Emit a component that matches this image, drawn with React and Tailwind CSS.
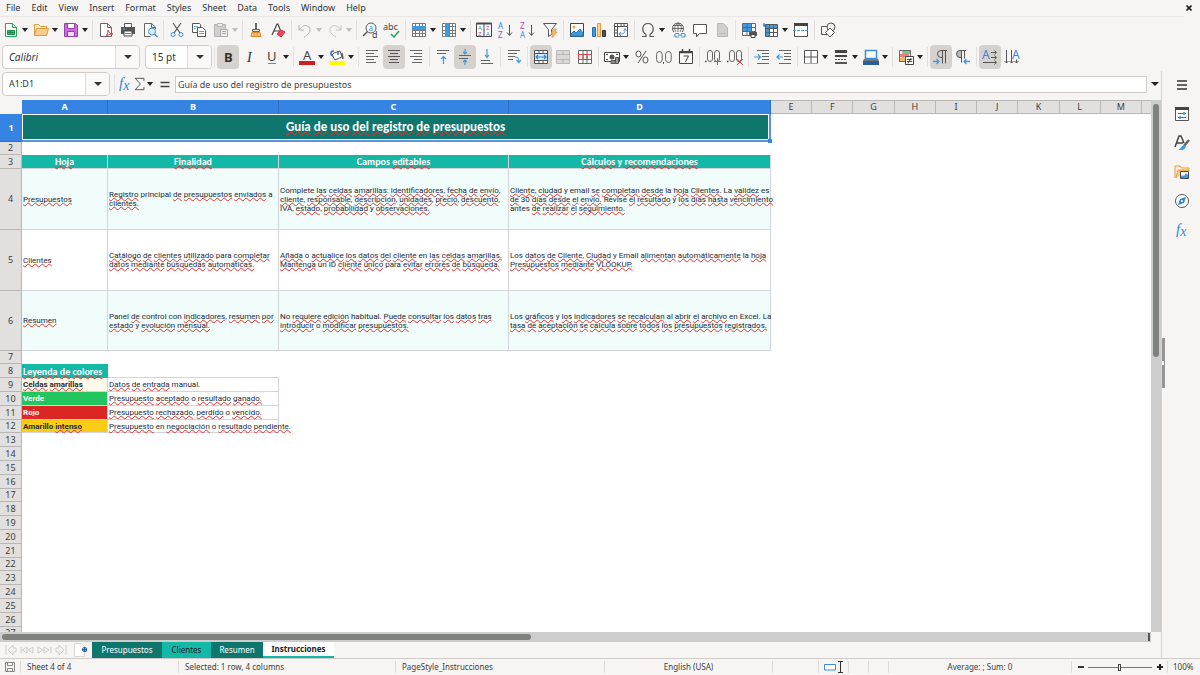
const ICONS = {
  newDoc: (
    <>
      <path d="M2.5 1.5h7l4 4v9h-11z" fill="#fff" stroke="#27a35c" />
      <path d="M9.5 1.5v4h4" fill="#bfe8cf" stroke="#27a35c" />
      <path d="M4.5 8.5h7v4h-7zM4.5 10.5h7M7.5 8.5v4" fill="#43b56f" stroke="#1d8f4c" />
    </>
  ),
  open: (
    <>
      <path d="M1.5 13.5v-11h4l2 2h6v3" fill="#fff3df" stroke="#e39a3b" />
      <path d="M3.5 6.5h12l-2 7h-12z" fill="#f9cd8c" stroke="#e39a3b" />
    </>
  ),
  save: (
    <>
      <path d="M1.5 1.5h11l2 2v11h-13z" fill="#c86dd7" stroke="#9a3fb0" />
      <path d="M4.5 1.5h7v5h-7z" fill="#fff" stroke="#9a3fb0" />
      <path d="M4.5 9.5h7v5h-7z" fill="#f3dbf7" stroke="#9a3fb0" />
    </>
  ),
  pdf: (
    <>
      <path d="M2.5 1.5h7l4 4v9h-11z" fill="#fff" stroke="#666" />
      <path d="M9.5 1.5v4h4" stroke="#666" />
      <path d="M7 15c2-1 3-4 3-7 1 3 3 4 5 4-3 0-6 1-8 3z" stroke="#e0383e" />
    </>
  ),
  print: (
    <>
      <path d="M4.5 5.5v-4h7v4" fill="#fff" stroke="#555" />
      <path d="M1 5h14v7H1z" fill="#555" />
      <path d="M4 9h8v5H4z" fill="#fff" stroke="#4a4a4a" />
      <path d="M5 11.5h6" stroke="#3d8fd1" />
      <path d="M3 7h2" stroke="#5fb4ef" />
    </>
  ),
  preview: (
    <>
      <path d="M13.5 7V5L9.5 1.5h-7v13h6" fill="#fff" stroke="#666" />
      <path d="M9.5 1.5v4h4" stroke="#666" />
      <circle cx="10" cy="9.5" r="3.5" fill="#d8ecfa" stroke="#3d8fd1" />
      <path d="M12.5 12l3 3" stroke="#3d8fd1" strokeWidth="1.5" />
    </>
  ),
  cut: (
    <>
      <path d="M4 1l7 10M12 1L5 11" stroke="#555" strokeWidth="1.2" />
      <circle cx="4" cy="12.5" r="2" stroke="#3d8fd1" />
      <circle cx="12" cy="12.5" r="2" stroke="#3d8fd1" />
    </>
  ),
  copy: (
    <>
      <path d="M1.5 1.5h7l1 1v8h-8z" fill="#fff" stroke="#555" />
      <path d="M6.5 5.5h5l3 3v6h-8z" fill="#fff" stroke="#555" />
      <path d="M3 4.5h4M3 6.5h2M8 9.5h5M8 11.5h5" stroke="#5ba3da" />
    </>
  ),
  paste: (
    <>
      <path d="M1.5 2.5h11v12h-11z" fill="#d0d0d0" stroke="#b5b5b5" />
      <path d="M4.5 1.5h5v3h-5z" fill="#eee" stroke="#b5b5b5" />
      <path d="M7.5 7.5h7v7h-7zM9 9.5h4M9 11.5h4" fill="#eee" stroke="#aaa" />
    </>
  ),
  brush: (
    <>
      <path d="M8 1v6" stroke="#666" strokeWidth="2" />
      <path d="M4.5 7.5h7v2h-7z" fill="#fff" stroke="#666" />
      <path d="M4 10.5h8l1 4H3z" fill="#f9cd8c" stroke="#e0872b" />
      <path d="M6 11v3M9 11v3" stroke="#e0872b" />
    </>
  ),
  clearFmt: (
    <>
      <path d="M2 13L7 2h1l3 8M4 9h6" stroke="#444" strokeWidth="1.2" />
      <path d="M7 12l4-4 4 2-4 5z" fill="#ee4b55" stroke="#d12c38" />
    </>
  ),
  undo: <path d="M2 3v5h5M2 8c3-4 7-6 10-3 3 4-1 8-5 10" stroke="#b4b4b4" />,
  redo: <path d="M14 3v5H9M14 8c-3-4-7-6-10-3-3 4 1 8 5 10" stroke="#c4c4c4" />,
  find: (
    <>
      <circle cx="9" cy="6" r="5" stroke="#555" fill="#fff" />
      <path d="M5.5 9.5L1 14" stroke="#555" strokeWidth="1.5" />
      <text x="6.5" y="8.5" fontSize="8" fill="#3584e4">a</text>
      <text x="10" y="16" fontSize="9" fill="#444">d</text>
    </>
  ),
  spell: (
    <>
      <text x="-1" y="8" fontSize="9" fill="#444">abc</text>
      <path d="M7 12l3 3 5-6" stroke="#27a35c" strokeWidth="1.5" />
    </>
  ),
  rows: (
    <>
      <path d="M1.5 1.5h13v13h-13zM1.5 8.5h13M1.5 11.5h13M4.5 1v13M8.5 1v13M11.5 1v13" stroke="#777" fill="#fff" />
      <path d="M1 4h14v4H1z" fill="#3d9be0" />
    </>
  ),
  cols: (
    <>
      <path d="M1.5 1.5h13v13h-13zM1.5 4.5h13M1.5 8.5h13M1.5 11.5h13M8.5 1v13M11.5 1v13" stroke="#777" fill="#fff" />
      <path d="M4 1h4v14H4z" fill="#3d9be0" />
    </>
  ),
  sort: (
    <>
      <path d="M.5 1.5h15v13H.5zM8 1v14" stroke="#444" fill="#fff" />
      <path d="M.5 1.5h15" stroke="#444" strokeWidth="2" />
      <text x="2" y="8" fontSize="6" fill="#3584e4">A</text>
      <text x="2" y="14" fontSize="6" fill="#b04ac0">Z</text>
      <text x="10" y="8" fontSize="6" fill="#b04ac0">Z</text>
      <text x="10" y="14" fontSize="6" fill="#3584e4">A</text>
    </>
  ),
  az: (
    <>
      <text x="0" y="7" fontSize="8" fill="#3584e4">A</text>
      <text x="0" y="16" fontSize="8" fill="#b04ac0">Z</text>
      <path d="M11.5 3v10M9 10.5l2.5 3 2.5-3" stroke="#555" />
    </>
  ),
  za: (
    <>
      <text x="0" y="7" fontSize="8" fill="#b04ac0">Z</text>
      <text x="0" y="16" fontSize="8" fill="#3584e4">A</text>
      <path d="M11.5 3v10M9 10.5l2.5 3 2.5-3" stroke="#555" />
    </>
  ),
  filter: (
    <>
      <path d="M1.5 1.5h13l-5 6v5l-3 2v-7z" fill="#fff" stroke="#555" />
      <path d="M11 7h3l-1 3h2l-5 6 1-4H9z" fill="#f5b565" stroke="#e39a3b" strokeWidth=".7" />
    </>
  ),
  image: (
    <>
      <path d="M1.5 1.5h13v13h-13z" fill="#fff" stroke="#444" />
      <circle cx="5" cy="5" r="1.5" fill="#f0a24b" />
      <path d="M2 14v-2l3-3 2 2 4-4 3 4v3z" fill="#3d9be0" stroke="#2a7fc4" />
    </>
  ),
  chart: (
    <>
      <path d="M1.5 5.5h3v9h-3z" fill="#3d9be0" stroke="#2472b5" />
      <path d="M6.5 1.5h3v13h-3z" fill="#fbcf93" stroke="#e39a3b" />
      <path d="M11.5 8.5h3v6h-3z" fill="#555" stroke="#333" />
    </>
  ),
  pivot: (
    <>
      <path d="M1.5 1.5h13v13h-13zM1.5 4.5h13M4.5 1.5v13M8 1.5v3M11 1.5v3M1.5 8h3M1.5 11h3" fill="#fff" stroke="#555" />
      <path d="M7 12c4 0 5-1 5-5M8 10l-2 2 2 2M10.5 8.5l1.5-2 1.5 2" stroke="#3d8fd1" />
    </>
  ),
  omega: <path d="M2 14.5h4v-2c-5-3-4-11 2-11s7 8 2 11v2h4" stroke="#555" strokeWidth="1.2" />,
  link: (
    <>
      <circle cx="8" cy="6.5" r="5.5" stroke="#555" />
      <path d="M8 1v9M2.5 6.5h11M4 3.5h8M8 1c-4 3-4 6-2 9M8 1c4 3 4 6 2 9" stroke="#555" strokeWidth=".8" />
      <path d="M4 10h12v6H4z" fill="#f6f5f4" />
      <path d="M9 11.5H6.5a1.7 1.7 0 000 3.500H9M11 11.5h2.500a1.700 1.700 0 010 3.500H11M8 13.2h4" stroke="#3d9be0" strokeWidth="1.2" />
    </>
  ),
  comment: <path d="M1.5 2.5h13v9h-7l-3 3.5v-3.5h-3z" fill="#fff" stroke="#555" />,
  header: <path d="M3.5 1.5h6l4 4v9h-10zM5 11.5h7" fill="#cfcfcf" stroke="#b9b9b9" />,
  printArea: (
    <>
      <path d="M1.5 1.5h13v12h-13zM1.5 5.5h13M1.5 9.5h13M6 1v12M10.5 1v12" fill="#fff" stroke="#666" />
      <path d="M2 2h8v7H2z" fill="#3d9be0" />
      <path d="M2 5.5h8M6 2v7" stroke="#2472b5" />
      <path d="M8 10h8v4H8z" fill="#555" />
      <path d="M10 12.5h4v3h-4z" fill="#fff" stroke="#444" />
    </>
  ),
  freeze: (
    <>
      <path d="M2.5 2.5h12v12h-12zM2.5 6.5h12M2.5 10.5h12M6.5 2v12M10.5 2v12" fill="#fff" stroke="#555" />
      <path d="M3 3h11v3H3zM3 7h3v7H3z" fill="#3d9be0" />
      <path d="M6.5 3v3M10.5 3v3M3 10.5h3" stroke="#2472b5" />
      <path d="M1 1v4M0 3h4" stroke="#2472b5" />
    </>
  ),
  split: (
    <>
      <path d="M1.5 1.5h13v13h-13z" fill="#fff" stroke="#555" />
      <path d="M1 2.5h14" stroke="#444" strokeWidth="3" />
      <path d="M0 8.5h16" stroke="#3d9be0" strokeDasharray="3 1" />
    </>
  ),
  shapes: (
    <>
      <path d="M1.5 4.5h8v8h-8z" stroke="#555" />
      <circle cx="11" cy="5" r="4" fill="#f6f5f4" stroke="#555" />
      <path d="M10 6l4.5 4.5L10 15l-4.5-4.5z" fill="#fff" stroke="#555" />
    </>
  ),
  bold: <text x="4" y="13" fontSize="13" fontWeight="700" fill="#333">B</text>,
  italic: <text x="5" y="13" fontSize="14" fontStyle="italic" fontFamily="Liberation Serif, serif" fill="#333">I</text>,
  underline: (
    <>
      <text x="3" y="12" fontSize="13" fill="#444">U</text>
      <path d="M4 14.5h8" stroke="#3d9be0" />
    </>
  ),
  fontColor: (
    <>
      <text x="4" y="11" fontSize="13" fill="#444">A</text>
      <path d="M0 12h16v4H0z" fill="#c9211e" />
    </>
  ),
  fillColor: (
    <>
      <path d="M5 4l6-2 2 6-7 3-3-5z" fill="#fff" stroke="#555" />
      <path d="M4 7C1 6 1 2 5 2M9 2v4" stroke="#2472b5" strokeWidth="1.5" />
      <path d="M13 4l1 6" stroke="#555" strokeWidth="1.5" />
      <path d="M0 12h16v4H0z" fill="#ffff00" />
    </>
  ),
  left: <path d="M2 1.5h12M2 4.5h8M2 7.5h12M2 10.5h8M2 13.5h10" stroke="#666" />,
  center: <path d="M2 1.5h12M4 4.5h8M2 7.5h12M4 10.5h8M3 13.5h10" stroke="#555" />,
  right: <path d="M2 1.5h12M6 4.5h8M2 7.5h12M6 10.5h8M4 13.5h10" stroke="#666" />,
  top: (
    <>
      <path d="M2 1.5h12M2 4.5h9" stroke="#666" />
      <path d="M8.5 15V7.5M6 10l2.5-2.5L11 10" stroke="#3d9be0" strokeWidth="1.2" />
    </>
  ),
  middle: (
    <>
      <path d="M2 6.5h12M2 9.5h9" stroke="#666" />
      <path d="M8 0v5M6 3l2 2 2-2M8 16v-5M6 13l2-2 2 2" stroke="#3d9be0" strokeWidth="1.2" />
    </>
  ),
  bottom: (
    <>
      <path d="M2 11.5h9M2 14.5h12" stroke="#666" />
      <path d="M8 0v8M6 6l2 2.5L10 6" stroke="#3d9be0" strokeWidth="1.2" />
    </>
  ),
  wrap: (
    <>
      <path d="M2 1.5h12M2 4.5h9M2 7.5h7M2 10.5h5" stroke="#666" />
      <path d="M9 8c3 0 4 1 4 5M10.5 11l2.5 2.5 2-2.5" stroke="#3d9be0" strokeWidth="1.2" />
    </>
  ),
  merge: (
    <>
      <path d="M1.5 1.5h13v13h-13zM1.5 4.5h13M1.5 11.5h13M6 1v3M10 1v3M6 12v3M10 12v3" fill="#fff" stroke="#555" />
      <path d="M2 5h12v6H2z" fill="#d3eafa" />
      <path d="M3 8h10M5 6L3 8l2 2M11 6l2 2-2 2" stroke="#2e88cc" strokeWidth="1.2" />
    </>
  ),
  mergeOff: <path d="M1.5 1.5h13v13h-13zM1.5 5.5h13M1.5 10.5h13M8 1v4M8 11v4" fill="#d9d9d9" stroke="#b9b9b9" />,
  unmerge: (
    <>
      <path d="M1.5 1.5h13v13h-13zM6 1v13M10 1v13" fill="#fff" stroke="#666" />
      <path d="M1.5 5.5h13v5h-13zM6 5v6M10 5v6" stroke="#d8404a" />
    </>
  ),
  currency: (
    <>
      <path d="M.5 3.5h15v9H.5z" fill="#fff" stroke="#444" />
      <circle cx="8" cy="8" r="2.5" fill="#555" />
      <path d="M2 5.5h2M12 5.5h2M2 10.5h2" stroke="#444" />
      <path d="M7 11.5h4v3H7zM11.5 8.5h3v6h-3z" fill="#999" stroke="#555" />
    </>
  ),
  percent: (
    <>
      <ellipse cx="4.5" cy="5" rx="2.5" ry="3" stroke="#555" />
      <ellipse cx="11.5" cy="11" rx="2.5" ry="3" stroke="#555" />
      <path d="M12 2L4 14" stroke="#555" />
    </>
  ),
  number: (
    <>
      <rect x=".6" y="2.5" width="5.6" height="11" rx="2.8" stroke="#666" />
      <rect x="9.6" y="2.5" width="5.6" height="11" rx="2.8" stroke="#666" />
      <path d="M7.5 13v2" stroke="#555" />
    </>
  ),
  date: (
    <>
      <path d="M1.5 2.5h13v12h-13z" fill="#fff" stroke="#444" />
      <path d="M1 3.5h14M4.5 0v3M11.5 0v3" stroke="#444" strokeWidth="1.5" />
      <path d="M5.5 7h5l-3 6" stroke="#444" />
    </>
  ),
  addDec: (
    <>
      <path d="M0 12.5h1.5" stroke="#444" strokeWidth="1.5" />
      <rect x="2.5" y="1.5" width="5" height="11" rx="2.5" stroke="#666" />
      <rect x="9.5" y="1.5" width="5" height="11" rx="2.5" stroke="#666" />
      <path d="M12.5 9v7M9 12.5h7" stroke="#3584e4" />
    </>
  ),
  delDec: (
    <>
      <path d="M0 12.5h1.5" stroke="#444" strokeWidth="1.5" />
      <rect x="2.5" y="1.5" width="5" height="11" rx="2.5" stroke="#666" />
      <rect x="9.5" y="1.5" width="5" height="11" rx="2.5" stroke="#666" />
      <path d="M10 10l6 6M16 10l-6 6" stroke="#e0383e" />
    </>
  ),
  indent: (
    <>
      <path d="M3 1.5h12M8 4.5h7M8 7.5h7M8 10.5h7M3 14.5h12" stroke="#666" />
      <path d="M0 8h6M4 5.5L6.5 8 4 10.5" stroke="#3d9be0" strokeWidth="1.2" />
    </>
  ),
  outdent: (
    <>
      <path d="M3 1.5h12M8 4.5h7M8 7.5h7M8 10.5h7M3 14.5h12" stroke="#666" />
      <path d="M1 8h6M3.5 5.5L1 8l2.5 2.5" stroke="#3d9be0" strokeWidth="1.2" />
    </>
  ),
  borders: (
    <>
      <path d="M1.5 14V1.5h13V14M8 1v13M1 8h14" fill="#fff" stroke="#555" />
      <path d="M1 14.5h14" stroke="#e39a3b" />
    </>
  ),
  borderStyle: (
    <>
      <path d="M2 2.5h12" stroke="#444" strokeWidth="3" />
      <path d="M2 7h12" stroke="#444" strokeWidth="2" />
      <path d="M2 10.5h12" stroke="#555" strokeDasharray="2 1" />
      <path d="M2 14h12" stroke="#555" strokeWidth="2" />
    </>
  ),
  borderColor: (
    <>
      <path d="M2.5 1.5h11v8h-11z" fill="#fff" stroke="#3d8fd1" strokeWidth="1.5" />
      <path d="M1 10h14l1 2H0z" fill="#777" />
      <path d="M0 12h16v4H0z" fill="#2a6099" />
    </>
  ),
  cond: (
    <>
      <path d="M1.5 1.5h11v11h-11zM5 1v11M9 1v11" fill="#fff" stroke="#666" />
      <path d="M5 2h7v3H5z" fill="#6ac98a" />
      <path d="M2 5h9v3H2z" fill="#ef7b80" />
      <path d="M2 9h5v3H2z" fill="#f5b565" />
      <path d="M7.5 7.5h8v8h-8z" fill="#fff" stroke="#444" />
      <path d="M9 10.5h5M9 12.5h5M13 9l-3 5.5" stroke="#444" />
    </>
  ),
  ltr: (
    <>
      <path d="M14 1.5H8a3.5 3.5 0 000 7h1M9.5 1.5v13M12.5 1.5v13" stroke="#555" />
      <path d="M0 12.5h6M3.5 10L6 12.5 3.5 15" stroke="#3d9be0" strokeWidth="1.3" />
    </>
  ),
  rtl: (
    <>
      <path d="M7 1.5H5a3.5 3.5 0 000 7h2z" fill="#bbb" />
      <path d="M11 1.5H5a3.5 3.5 0 000 7h1M6.5 1.5v12M9.5 1.5v8" stroke="#555" />
      <path d="M9 12.5h6M11.5 10L9 12.5l2.5 2.5" stroke="#3d9be0" strokeWidth="1.3" />
    </>
  ),
  textLR: (
    <>
      <text x="0" y="10" fontSize="12" fill="#3584e4">A</text>
      <path d="M9 3.5h5M12.5 1.5l2 2-2 2M9 8.5h5M12.5 6.5l2 2-2 2M1 13.5h13M12.5 11.5l2 2-2 2" stroke="#555" />
    </>
  ),
  textTB: (
    <>
      <text x="8" y="10" fontSize="12" fill="#3584e4">A</text>
      <path d="M2.5 1v13M.5 12l2 2 2-2M7.5 1v13M5.5 12l2 2 2-2M12.5 10.5V14M10.5 12l2 2 2-2" stroke="#555" />
    </>
  ),
  fx: (
    <text x="2" y="12" fontSize="15" fontStyle="italic" fontFamily="Liberation Serif, serif" fill="#2e88d8">
      f<tspan fontSize="14" dy="2">x</tspan>
    </text>
  ),
  sigma: <path d="M12.5 4.5v-3h-10l6 6.5-6 6.5h10v-3" stroke="#444" />,
  equals: <path d="M3.5 6.5h9M3.5 10.5h9" stroke="#444" strokeWidth="1.5" />,
  menu: <path d="M3 4h10M3 8h10M3 12h10" stroke="#333" strokeWidth="1.5" />,
  props: (
    <>
      <path d="M1.5 1.5h13v13h-13z" fill="#fff" stroke="#555" />
      <path d="M1 2.5h14" stroke="#444" strokeWidth="3" />
      <path d="M4 7.5h8M4 11.5h8" stroke="#666" />
      <path d="M10 6v3M6 10v3" stroke="#3d9be0" strokeWidth="1.5" />
    </>
  ),
  styles: (
    <>
      <path d="M1 12L5 1h2l3 7M3 8h6" stroke="#444" strokeWidth="1.5" />
      <path d="M15 5l-5 6" stroke="#666" strokeWidth="2.5" />
      <path d="M10 10l2 2c-2 4-5 3-8 3 3-1 3-4 6-5z" fill="#3d9be0" />
    </>
  ),
  gallery: (
    <>
      <path d="M1 14V2h5l1.5 2H15v3" fill="#fff3df" stroke="#e39a3b" />
      <path d="M2 14l2-8h11" fill="#f9cd8c" stroke="#e39a3b" />
      <path d="M6.5 7.5h8v7h-8z" fill="#fff" stroke="#444" />
      <path d="M7 14v-2l2-1 1 1 2-3 2 2v3z" fill="#3d9be0" />
    </>
  ),
  navigator: (
    <>
      <circle cx="8" cy="8" r="6.5" fill="#fff" stroke="#555" />
      <path d="M12 4l-2 6-6 2 2-6z" fill="#2e88cc" />
      <circle cx="8" cy="8" r="1" fill="#fff" />
    </>
  ),
};

function Icon({ name }) {
  return (
    <svg viewBox="0 0 16 16" className="h-4 w-4 shrink-0 overflow-visible" fill="none" aria-hidden="true">
      {ICONS[name]}
    </svg>
  );
}

function Caret({ dim }) {
  return (
    <svg viewBox="0 0 6 4" className={dim ? "h-1 w-1.5 text-[#bdbdbd]" : "h-1 w-1.5 text-[#222]"} aria-hidden="true">
      <path d="M0 0h6L3 4z" fill="currentColor" />
    </svg>
  );
}

// "|" is a separator, "+" after a name adds a drop-down arrow,
// "*" marks a pressed button and "-" a disabled one
const STANDARD_BAR =
  "newDoc+ open+ save+ | pdf print preview | cut copy paste+- | brush clearFmt | undo+- redo+- | find spell | rows+ cols+ | sort az za filter | image chart pivot | omega+ link comment header- | printArea freeze+ split | shapes";
const FORMAT_BAR =
  "bold* italic underline+ | fontColor+ fillColor+ | left center* right | top middle* bottom | wrap | merge* mergeOff- unmerge | currency+ percent number date | addDec delDec | indent outdent | borders+ borderStyle+ borderColor+ | cond+ | ltr* rtl | textLR* textTB";

function Separator() {
  return <span className="mx-0.5 h-5 w-px shrink-0 bg-[#e3e1df]" />;
}

function ToolItems({ items }) {
  return items.split(" ").map((item, i) => {
    if (item === "|") return <Separator key={i} />;
    const name = item.replace(/[+*-]/g, "");
    const pressed = item.includes("*");
    const disabled = item.includes("-");
    return (
      <span key={name} className="flex shrink-0 items-center">
        <button
          type="button"
          aria-label={name}
          disabled={disabled}
          className={
            pressed
              ? "flex h-6 w-[22px] items-center justify-center rounded bg-[#d5d1cd]"
              : "flex h-6 w-[22px] items-center justify-center rounded"
          }
        >
          <Icon name={name} />
        </button>
        {item.includes("+") && (
          <button type="button" aria-label={`${name} options`} disabled={disabled} className="flex h-6 w-2 items-center">
            <Caret dim={disabled} />
          </button>
        )}
      </span>
    );
  });
}

function Combo({ label, value, className, inputClass }) {
  return (
    <div className={`flex h-6 shrink-0 overflow-hidden rounded border border-[#cfccc9] bg-white ${className}`}>
      <input aria-label={label} defaultValue={value} className={`min-w-0 flex-1 px-1.5 outline-none ${inputClass}`} />
      <button
        type="button"
        aria-label={`${label} list`}
        className="flex w-6 items-center justify-center border-l border-[#dedcda] bg-[#faf9f8]"
      >
        <svg viewBox="0 0 8 4" className="h-1 w-2" aria-hidden="true">
          <path d="M0 0h8L4 4z" fill="#2e3436" />
        </svg>
      </button>
    </div>
  );
}

// Words between tildes carry the spell checker's wavy line
function Spelled({ text }) {
  return text.split(/(~[^~]+~)/).map((part, i) =>
    part.startsWith("~") ? (
      <span
        key={i}
        className="underline decoration-[#e5322d] decoration-wavy decoration-1 underline-offset-0 [text-decoration-skip-ink:none]"
      >
        {part.slice(1, -1)}
      </span>
    ) : (
      part
    )
  );
}

function Lines({ lines }) {
  return lines.map((line) => (
    <span key={line} className="block">
      <Spelled text={line} />
    </span>
  ));
}

const COLUMNS = ["A", "B", "C", "D", "E", "F", "G", "H", "I", "J", "K", "L", "M"];

const HEADINGS = ["~Hoja~", "~Finalidad~", "Campos ~editables~", "~Cálculos~ y ~recomendaciones~"];

const GUIDE = [
  [
    ["~Presupuestos~"],
    ["~Registro~ principal ~de~ ~presupuestos~ ~enviados~ a", "~clientes.~"],
    [
      "Complete ~las~ ~celdas~ ~amarillas~: ~identificadores~, ~fecha~ ~de~ ~envío~,",
      "~cliente~, ~responsable~, ~descripción~, ~unidades~, ~precio~, ~descuento~,",
      "IVA, ~estado~, ~probabilidad~ y ~observaciones.~",
    ],
    [
      "~Cliente~, ~ciudad~ y email ~se~ ~completan~ ~desde~ la ~hoja~ ~Clientes.~ La ~validez~ es",
      "~de~ 30 ~días~ ~desde~ ~el~ ~envío.~ Revise ~el~ ~resultado~ y ~los~ ~días~ ~hasta~ ~vencimiento~",
      "antes ~de~ ~realizar~ ~el~ ~seguimiento.~",
    ],
  ],
  [
    ["~Clientes~"],
    ["~Catálogo~ ~de~ ~clientes~ ~utilizado~ para ~completar~", "~datos~ ~mediante~ ~búsquedas~ ~automáticas.~"],
    [
      "~Añada~ o ~actualice~ ~los~ ~datos~ ~del~ ~cliente~ en ~las~ ~celdas~ ~amarillas.~",
      "~Mantenga~ un ID ~cliente~ ~único~ para ~evitar~ ~errores~ ~de~ ~búsqueda.~",
    ],
    [
      "Los ~datos~ ~de~ ~Cliente~, ~Ciudad~ y Email ~alimentan~ ~automáticamente~ la ~hoja~",
      "~Presupuestos~ ~mediante~ ~VLOOKUP.~",
    ],
  ],
  [
    ["~Resumen~"],
    ["Panel ~de~ control con ~indicadores~, ~resumen~ ~por~", "~estado~ y ~evolución~ ~mensual.~"],
    [
      "No ~requiere~ ~edición~ habitual. ~Puede~ ~consultar~ ~los~ ~datos~ ~tras~",
      "~introducir~ o ~modificar~ ~presupuestos.~",
    ],
    [
      "Los ~gráficos~ y ~los~ ~indicadores~ ~se~ ~recalculan~ al ~abrir~ ~el~ ~archivo~ en Excel. La",
      "~tasa~ ~de~ ~aceptación~ ~se~ ~calcula~ ~sobre~ ~todos~ ~los~ ~presupuestos~ ~registrados.~",
    ],
  ],
];

const LEGEND = [
  { name: "~Celdas~ ~amarillas~", text: "~Datos~ ~de~ ~entrada~ manual.", tone: "bg-[#fffbeb] text-[#1f2937]" },
  { name: "Verde", text: "~Presupuesto~ ~aceptado~ o ~resultado~ ~ganado.~", tone: "bg-[#22c55e] text-white" },
  { name: "~Rojo~", text: "~Presupuesto~ ~rechazado~, ~perdido~ o ~vencido.~", tone: "bg-[#dc2626] text-white" },
  {
    name: "Amarillo ~intenso~",
    text: "~Presupuesto~ en ~negociación~ o ~resultado~ ~pendiente.~",
    tone: "bg-[#facc15] text-[#1f2937]",
  },
];

function RowHead({ n, active }) {
  return (
    <th
      scope="row"
      className={
        active
          ? "border-b border-[#1c71d8] bg-[#3584e4] p-0 text-[9px] font-bold text-white"
          : "border-b border-r border-[#b9b7b5] bg-[#e2e0de] p-0 text-[9px] font-normal text-[#3d3d3d]"
      }
    >
      {n}
    </th>
  );
}

function rowHeight(n) {
  return n % 5 === 2 ? "h-[13px]" : "h-[14px]";
}

function Sheet() {
  const cellText = "[font-family:Roboto,sans-serif] text-[8px] leading-[9px]";
  return (
    <table className="w-full table-fixed border-separate border-spacing-0 leading-[12px]">
      <colgroup>
        <col className="w-[22px]" />
        <col className="w-[86px]" />
        <col className="w-[171px]" />
        <col className="w-[230px]" />
        <col className="w-[262px]" />
        {COLUMNS.slice(4).map((c) => (
          <col key={c} />
        ))}
        <col className="w-[9px]" />
      </colgroup>
      <thead>
        <tr className="h-[14px] text-[9px]">
          <td className="p-0" />
          {COLUMNS.map((c, i) => (
            <th
              key={c}
              scope="col"
              className={
                i < 4
                  ? "border-r border-[#2a6fc9] bg-[#3584e4] p-0 font-bold text-white"
                  : "border-b border-r border-t border-[#b9b7b5] bg-[#e2e0de] p-0 font-normal text-[#3d3d3d]"
              }
            >
              {c}
            </th>
          ))}
          <td className="border-y border-[#b9b7b5] bg-[#e2e0de] p-0" />
        </tr>
      </thead>
      <tbody>
        <tr className="h-[28px]">
          <RowHead n={1} active />
          <td
            colSpan={4}
            className="relative border-b-2 border-r-2 border-[#5c93dc] bg-[#0f766e] p-0 text-center text-[13px] leading-[18px] font-bold text-white shadow-[inset_0_0_0_1px_white] [font-family:Carlito,Lato,sans-serif]"
          >
            <Spelled text="~Guía~ ~de~ ~uso~ ~del~ ~registro~ ~de~ ~presupuestos~" />
            <span className="absolute -bottom-[3px] -right-[3px] h-1 w-1 bg-[#3584e4]" />
          </td>
        </tr>
        <tr className="h-[13px]">
          <RowHead n={2} />
        </tr>
        <tr className="h-[14px]">
          <RowHead n={3} />
          {HEADINGS.map((h) => (
            <td
              key={h}
              className="border-b border-r border-[#d1d5db] bg-[#14b8a6] p-0 text-center text-[10px] leading-[11px] font-bold text-white [font-family:Carlito,Lato,sans-serif]"
            >
              <Spelled text={h} />
            </td>
          ))}
        </tr>
        {GUIDE.map((row, r) => (
          <tr key={r} className={r === 2 ? "h-[60px]" : "h-[61px]"}>
            <RowHead n={r + 4} />
            {row.map((lines) => (
              <td
                key={lines[0]}
                className={`border-b border-r border-[#d1d5db] p-0 pl-px whitespace-nowrap text-[#1f2937] ${cellText} ${
                  r % 2 ? "bg-white" : "bg-[#f0fdfa]"
                }`}
              >
                <Lines lines={lines} />
              </td>
            ))}
          </tr>
        ))}
        <tr className="h-[13px]">
          <RowHead n={7} />
        </tr>
        <tr className="h-[14px]">
          <RowHead n={8} />
          <td className="bg-[#14b8a6] p-0 pl-px text-[10px] leading-[11px] font-bold whitespace-nowrap text-white [font-family:Carlito,Lato,sans-serif]">
            <Spelled text="~Leyenda~ ~de~ ~colores~" />
          </td>
          <td className="border-b border-[#d1d5db] p-0" />
        </tr>
        {LEGEND.map((item, i) => (
          <tr key={item.name} className={rowHeight(i + 9)}>
            <RowHead n={i + 9} />
            <td className={`border-b border-r border-[#d1d5db] p-0 pl-px font-bold whitespace-nowrap ${cellText} ${item.tone}`}>
              <Spelled text={item.name} />
            </td>
            <td className={`border-b border-r border-[#d1d5db] p-0 pl-px whitespace-nowrap text-[#1f2937] ${cellText}`}>
              <Spelled text={item.text} />
            </td>
          </tr>
        ))}
        {Array.from({ length: 15 }, (_, i) => i + 13).map((n) => (
          <tr key={n} className={rowHeight(n)}>
            <RowHead n={n} />
          </tr>
        ))}
      </tbody>
    </table>
  );
}

function FormulaBar() {
  return (
    <div className="flex h-[29px] shrink-0 items-start gap-0.5 pl-0.5 pt-px">
      <Combo label="Name Box" value="A1:D1" className="w-[108px]" inputClass="text-[9px]" />
      <div className="flex h-6 items-center">
        <Separator />
        <button type="button" aria-label="Function Wizard" className="flex w-4 justify-center">
          <Icon name="fx" />
        </button>
        <button type="button" aria-label="Select Function" className="flex items-center">
          <svg viewBox="0 0 16 16" className="h-3.5 w-3.5" fill="none" aria-hidden="true">
            {ICONS.sigma}
          </svg>
          <Caret />
        </button>
        <button type="button" aria-label="Formula" className="ml-1 flex w-4 justify-center">
          <Icon name="equals" />
        </button>
      </div>
      <input
        aria-label="Input line"
        defaultValue="Guía de uso del registro de presupuestos"
        className="mt-1 h-[17px] min-w-0 flex-1 border border-[#cfccc9] bg-white px-0.5 text-[9px] text-[#444] outline-none"
      />
      <button type="button" aria-label="Expand Formula Bar" className="mt-1 flex h-4 w-3 items-center justify-center">
        <svg viewBox="0 0 8 4" className="h-1 w-2" aria-hidden="true">
          <path d="M0 0h8L4 4z" fill="#222" />
        </svg>
      </button>
    </div>
  );
}

const TABS = [
  { name: "Presupuestos", style: "w-[70px] bg-[#0f766e] text-white" },
  { name: "Clientes", style: "w-[49px] bg-[#14b8a6] text-[#222]" },
  { name: "Resumen", style: "w-[52px] bg-[#0f766e] text-white" },
  { name: "Instrucciones", style: "w-[71px] border-b-2 border-[#14b8a6] bg-white font-bold text-[#222]" },
];

function SheetTabs() {
  return (
    <div className="flex h-4 shrink-0 text-[8px]">
      <svg viewBox="0 0 62 12" className="ml-[5px] mt-0.5 h-3 w-[62px]" fill="none" stroke="#cfcdcb" aria-hidden="true">
        <path d="M1 1v10M3 6l5-5v3h3v4H8v3zM22 3l-5 3 5 3zM28 3l-5 3 5 3zM16 3v6M33 3l5 3-5 3zM39 3l5 3-5 3zM46 3v6M59 6l-5-5v3h-3v4h3v3zM61 1v10" />
      </svg>
      <button type="button" aria-label="Add Sheet" className="ml-[7px] mr-1 w-[14px]">
        <svg viewBox="0 0 14 16" className="h-4 w-[14px]" fill="none" aria-hidden="true">
          <path d="M.5 1.5h7l3 3v10H.5z" fill="#fff" stroke="#dad8d6" />
          <circle cx="10.5" cy="7.5" r="2" fill="#fff" stroke="#2a5fb0" strokeWidth="1.2" />
          <path d="M10.5 5.5v4M8.5 7.5h4" stroke="#2a5fb0" />
        </svg>
      </button>
      {TABS.map((tab) => (
        <button key={tab.name} type="button" className={`flex items-center justify-center ${tab.style}`}>
          {tab.name}
        </button>
      ))}
    </div>
  );
}

function StatusBar() {
  const cell = "flex h-3 items-center border-l border-[#dedcda]";
  return (
    <footer className="flex h-[17px] shrink-0 items-center border-t border-[#cfccc9] text-[8px] text-[#3d3d3d]">
      <div className="flex w-5 shrink-0 justify-center">
        <svg viewBox="0 0 12 12" className="h-3 w-3" fill="none" stroke="#888" aria-hidden="true">
          <path d="M1.5 1.5h9v9h-9zM3.5 1.5v3h5v-3M3.5 10.5v-3h5v3" />
        </svg>
      </div>
      <div className={`flex-[151] pl-1.5 ${cell}`}>Sheet 4 of 4</div>
      <div className={`flex-[210] pl-1.5 ${cell}`}>Selected: 1 row, 4 columns</div>
      <div className={`flex-[202] pl-1.5 ${cell}`}>PageStyle_Instrucciones</div>
      <div className={`flex-[167] justify-center ${cell}`}>English (USA)</div>
      <div className={`w-[46px] ${cell}`} />
      <div className={`w-[30px] justify-center gap-0.5 ${cell}`}>
        <svg viewBox="0 0 22 12" className="h-3 w-[22px] shrink-0" fill="none" aria-hidden="true">
          <path d="M1.5 3.5h11v5.5h-11z" fill="#fff" stroke="#3d8fd1" />
          <path d="M15 .5h5M15 11.5h5M17.5 .5v11" stroke="#333" />
        </svg>
      </div>
      <div className={`w-5 ${cell}`} />
      <div className={`w-5 ${cell}`} />
      <div className={`flex-[182] justify-center ${cell}`}>Average: ; Sum: 0</div>
      <div className={`w-24 gap-1 pl-1.5 ${cell}`}>
        <button type="button" aria-label="Zoom Out" className="h-0.5 w-1.5 shrink-0 bg-[#333]" />
        <input
          type="range"
          aria-label="Zoom"
          defaultValue={49}
          className="h-2 w-16 appearance-none bg-transparent [&::-webkit-slider-runnable-track]:h-px [&::-webkit-slider-runnable-track]:bg-[#777] [&::-webkit-slider-thumb]:-mt-[3px] [&::-webkit-slider-thumb]:h-[7px] [&::-webkit-slider-thumb]:w-[3px] [&::-webkit-slider-thumb]:appearance-none [&::-webkit-slider-thumb]:border [&::-webkit-slider-thumb]:border-[#444] [&::-webkit-slider-thumb]:bg-white"
        />
        <button type="button" aria-label="Zoom In" className="h-2 w-2 shrink-0">
          <svg viewBox="0 0 8 8" className="h-2 w-2" stroke="#222" strokeWidth="2" aria-hidden="true">
            <path d="M1 4h6M4 1v6" />
          </svg>
        </button>
      </div>
      <div className={`w-[33px] pl-[5px] ${cell}`}>100%</div>
    </footer>
  );
}

const MENUS = ["File", "Edit", "View", "Insert", "Format", "Styles", "Sheet", "Data", "Tools", "Window", "Help"];
const SIDEBAR = ["menu", "props", "styles", "gallery", "navigator", "fx"];

export default function App() {
  return (
    <div className="flex h-screen flex-col overflow-hidden bg-[#f6f5f4] text-[#2e3436] [font-family:'Noto_Sans',sans-serif]">
      <header className="shrink-0">
        <nav className="mr-4 flex h-[17px] items-center gap-[11px] border-b border-[#e9e7e5] pl-1.5 text-[9px]">
          {MENUS.map((m) => (
            <button key={m} type="button">
              {m}
            </button>
          ))}
          <button type="button" aria-label="Close" className="-mr-2 ml-auto">
            <svg viewBox="0 0 6 6" className="h-1.5 w-1.5" stroke="#222" strokeWidth="1.6" aria-hidden="true">
              <path d="M.5.5l5 5M5.5.5l-5 5" />
            </svg>
          </button>
        </nav>
        <div className="flex h-[28px] items-center pb-0.5">
          <ToolItems items={STANDARD_BAR} />
        </div>
        <div className="flex h-[26px] items-start pl-0.5">
          <Combo label="Font Name" value="Calibri" className="mr-[5px] w-[138px]" inputClass="text-[10px] italic" />
          <Combo label="Font Size" value="15 pt" className="w-[67px]" inputClass="text-[10px]" />
          <div className="flex items-center">
            <Separator />
            <ToolItems items={FORMAT_BAR} />
          </div>
        </div>
      </header>

      <div className="flex min-h-0 flex-1">
        <main className="flex min-w-0 flex-1 flex-col">
          <FormulaBar />
          <div className="flex min-h-0 flex-1">
            <div className="min-w-0 flex-1 overflow-hidden bg-[linear-gradient(#f6f5f4_14px,white_14px)]">
              <Sheet />
            </div>
            <div className="w-2.5 shrink-0 bg-[#cdcdcd] px-0.5 pt-1">
              <div className="h-[48%] rounded-full bg-[#7f817f]" />
            </div>
          </div>
          <div className="mr-2.5 flex h-2.5 shrink-0 items-center bg-[#cdcdcd] pl-0.5">
            <div className="h-1.5 w-[46%] rounded-full bg-[#7f817f]" />
            <div className="ml-auto mr-px h-2 w-0.5 bg-[#555]" />
          </div>
          <SheetTabs />
        </main>
        <div className="flex w-1 shrink-0 items-center border-l border-[#d5d3d1]">
          <div className="-mt-1 flex h-[50px] w-1 items-center bg-[#959595]">
            <span className="h-1 w-0.5 bg-white" />
          </div>
        </div>
        <aside className="flex w-[35px] shrink-0 flex-col items-center gap-[13px] pt-1.5 pr-0.5">
          {SIDEBAR.map((name) => (
            <button key={name} type="button" aria-label={name} className="h-4 w-4">
              <Icon name={name} />
            </button>
          ))}
        </aside>
      </div>

      <StatusBar />
    </div>
  );
}
